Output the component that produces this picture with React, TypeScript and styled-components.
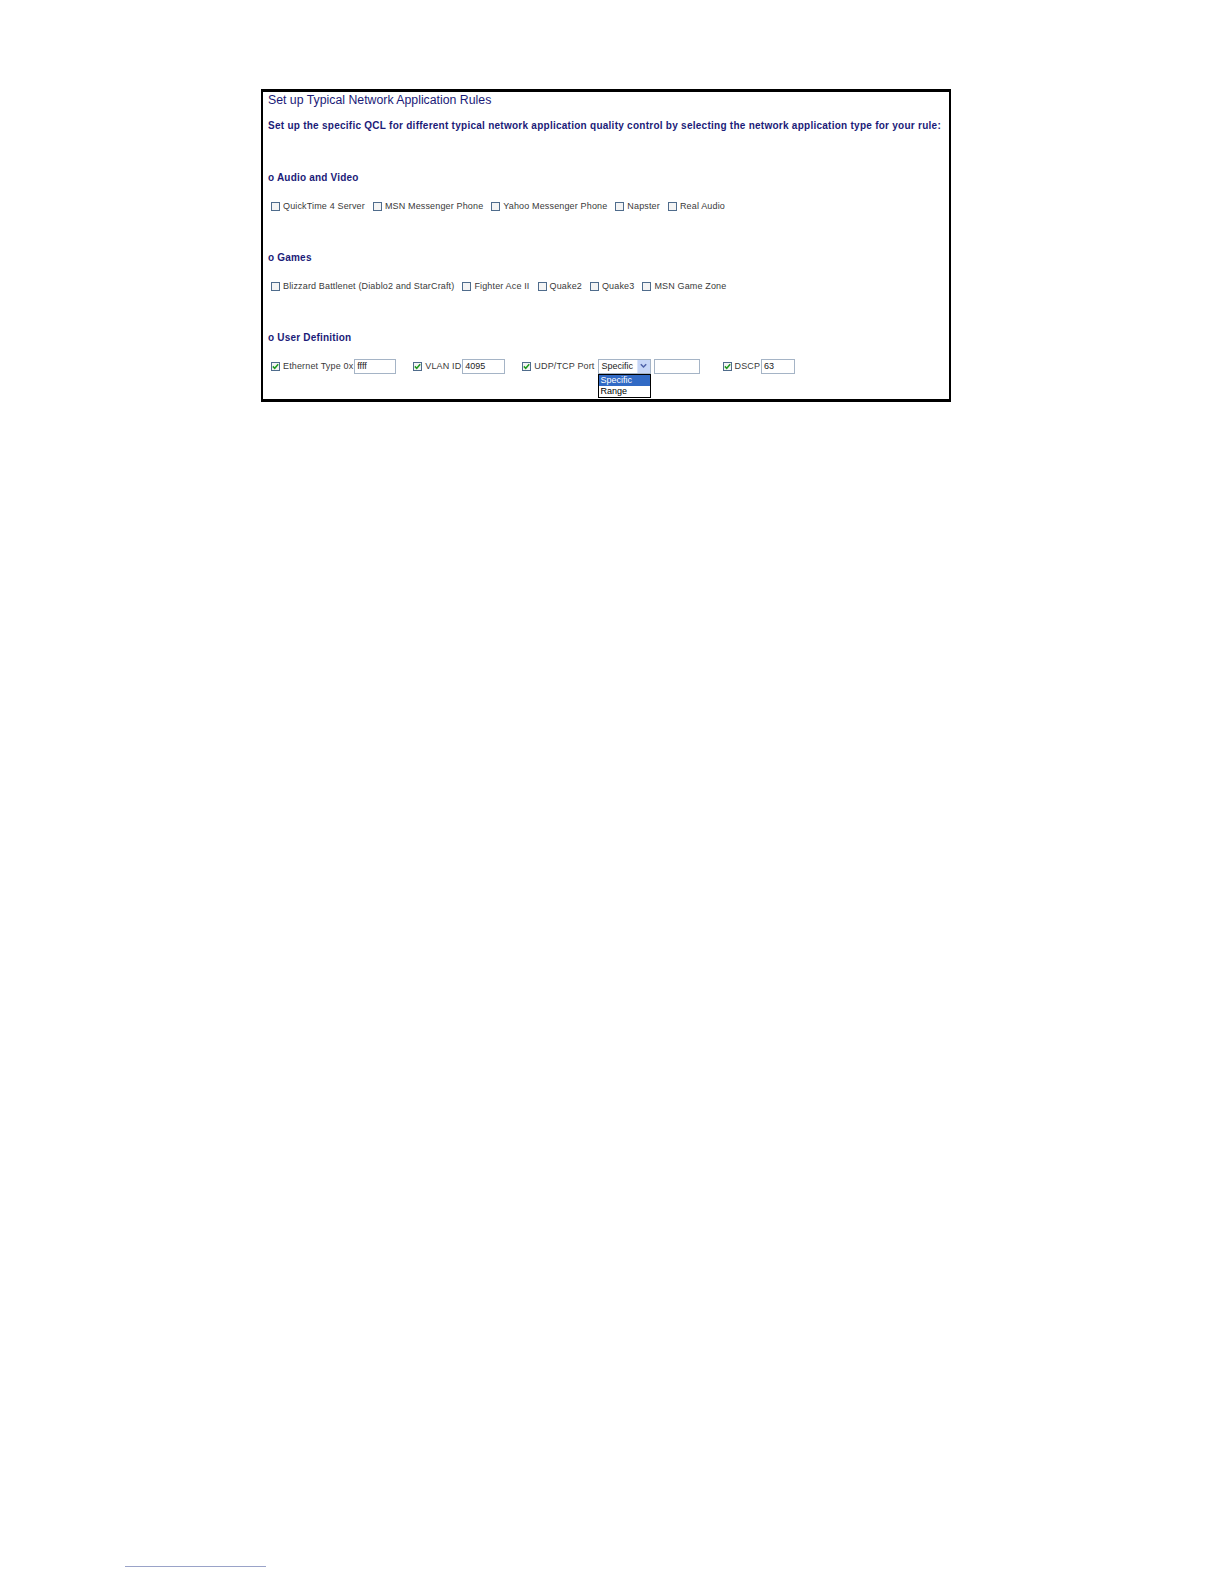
import React from "react";
import styled, { createGlobalStyle } from "styled-components";

const Global = createGlobalStyle`
  html, body { margin: 0; padding: 0; background: #ffffff; }
  body { font-family: "Liberation Sans", Arial, sans-serif; }
`;

const Page = styled.div`
  width: 1224px;
  min-height: 1584px;
  padding-top: 89px;
  box-sizing: border-box;
  display: flex;
  flex-direction: column;
`;

const Frame = styled.div`
  margin-left: 261px;
  width: 690px;
  height: 313px;
  box-sizing: border-box;
  border: 2px solid #000;
  border-width: 3px 2px 3px 2px;
  padding: 0 0 0 5px;
  display: flex;
  flex-direction: column;
`;

const Title = styled.div`
  font-size: 12.3px;
  line-height: 14px;
  color: #1b1b78;
  margin-top: 1px;
  white-space: nowrap;
`;

const Desc = styled.div`
  font-size: 10px;
  font-weight: bold;
  line-height: 14px;
  color: #1b1b78;
  margin-top: 12px;
  white-space: nowrap;
  letter-spacing: 0.26px;
`;

const Header = styled.div`
  font-size: 10px;
  font-weight: bold;
  line-height: 14px;
  color: #1b1b78;
  margin-top: 38px;
  white-space: nowrap;
  letter-spacing: 0.2px;
`;

const Row = styled.div`
  display: flex;
  align-items: center;
  height: 14px;
  margin-top: 14px;
  padding-left: 3px;
  white-space: nowrap;
`;

const Item = styled.label<{ $gap?: number }>`
  display: flex;
  align-items: center;
  margin-right: ${(p) => p.$gap ?? 8}px;
  position: relative;
`;

const Box = styled.span`
  width: 9px;
  height: 9px;
  box-sizing: border-box;
  border: 1px solid #4f6c8c;
  background: #f4f4f4;
  display: inline-flex;
  align-items: center;
  justify-content: center;
  margin-right: 3px;
`;

const Label = styled.span`
  font-size: 9px;
  color: #3a3a3a;
  letter-spacing: 0.15px;
`;

const Field = styled.span<{ $w: number }>`
  width: ${(p) => p.$w}px;
  height: 15px;
  box-sizing: border-box;
  border: 1px solid #a5b4c6;
  background: #fff;
  font-size: 9px;
  line-height: 13px;
  padding-left: 2px;
  color: #222;
  margin-left: 1px;
`;

const Select = styled.span`
  position: relative;
  width: 53px;
  height: 15px;
  box-sizing: border-box;
  border: 1px solid #a5b4c6;
  background: #fff;
  display: flex;
  align-items: center;
  margin-left: 3px;
`;

const SelectText = styled.span`
  flex: 1;
  font-size: 9px;
  padding-left: 3px;
  color: #222;
`;

const SelectBtn = styled.span`
  width: 12px;
  height: 13px;
  background: #c6d6f7;
  border-left: 1px solid #dbe6fb;
  display: flex;
  align-items: center;
  justify-content: center;
`;

const Menu = styled.div`
  position: absolute;
  left: -1px;
  top: 14px;
  width: 53px;
  box-sizing: border-box;
  border: 1px solid #000;
  background: #fff;
  display: flex;
  flex-direction: column;
  z-index: 2;
`;

const MenuItem = styled.div<{ $active?: boolean }>`
  font-size: 9px;
  line-height: 11px;
  padding-left: 2px;
  color: ${(p) => (p.$active ? "#fff" : "#000")};
  background: ${(p) => (p.$active ? "#316ac5" : "#fff")};
`;

const FootLine = styled.div`
  margin-left: 125px;
  margin-top: 1164px;
  width: 141px;
  height: 1px;
  background: #9aa3c8;
`;

const Check = () => (
  <svg width="7" height="7" viewBox="0 0 7 7">
    <path d="M0.8 3.4 L2.7 5.3 L6.2 1.2" stroke="#1f9a1f" strokeWidth="1.5" fill="none" />
  </svg>
);

const Checkbox = ({ checked }: { checked?: boolean }) => <Box>{checked ? <Check /> : null}</Box>;

const Chevron = () => (
  <svg width="7" height="6" viewBox="0 0 7 6">
    <path d="M0.8 1.2 L3.5 4 L6.2 1.2" stroke="#4d61a8" strokeWidth="1.5" fill="none" />
  </svg>
);

export default function App() {
  return (
    <>
      <Global />
      <Page>
        <Frame>
          <Title>Set up Typical Network Application Rules</Title>
          <Desc>
            Set up the specific QCL for different typical network application quality control by selecting the
            network application type for your rule:
          </Desc>

          <Header>o Audio and Video</Header>
          <Row>
            <Item><Checkbox /><Label>QuickTime 4 Server</Label></Item>
            <Item><Checkbox /><Label>MSN Messenger Phone</Label></Item>
            <Item><Checkbox /><Label>Yahoo Messenger Phone</Label></Item>
            <Item><Checkbox /><Label>Napster</Label></Item>
            <Item><Checkbox /><Label>Real Audio</Label></Item>
          </Row>

          <Header>o Games</Header>
          <Row>
            <Item><Checkbox /><Label>Blizzard Battlenet (Diablo2 and StarCraft)</Label></Item>
            <Item><Checkbox /><Label>Fighter Ace II</Label></Item>
            <Item><Checkbox /><Label>Quake2</Label></Item>
            <Item><Checkbox /><Label>Quake3</Label></Item>
            <Item><Checkbox /><Label>MSN Game Zone</Label></Item>
          </Row>

          <Header>o User Definition</Header>
          <Row>
            <Item $gap={17}><Checkbox checked /><Label>Ethernet Type 0x</Label><Field $w={42}>ffff</Field></Item>
            <Item $gap={17}><Checkbox checked /><Label>VLAN ID</Label><Field $w={43}>4095</Field></Item>
            <Item $gap={23}>
              <Checkbox checked />
              <Label>UDP/TCP Port</Label>
              <Select>
                <SelectText>Specific</SelectText>
                <SelectBtn><Chevron /></SelectBtn>
                <Menu>
                  <MenuItem $active>Specific</MenuItem>
                  <MenuItem>Range</MenuItem>
                </Menu>
              </Select>
              <Field $w={46} style={{ marginLeft: 3 }}></Field>
            </Item>
            <Item><Checkbox checked /><Label>DSCP</Label><Field $w={34}>63</Field></Item>
          </Row>
        </Frame>
        <FootLine />
      </Page>
    </>
  );
}
